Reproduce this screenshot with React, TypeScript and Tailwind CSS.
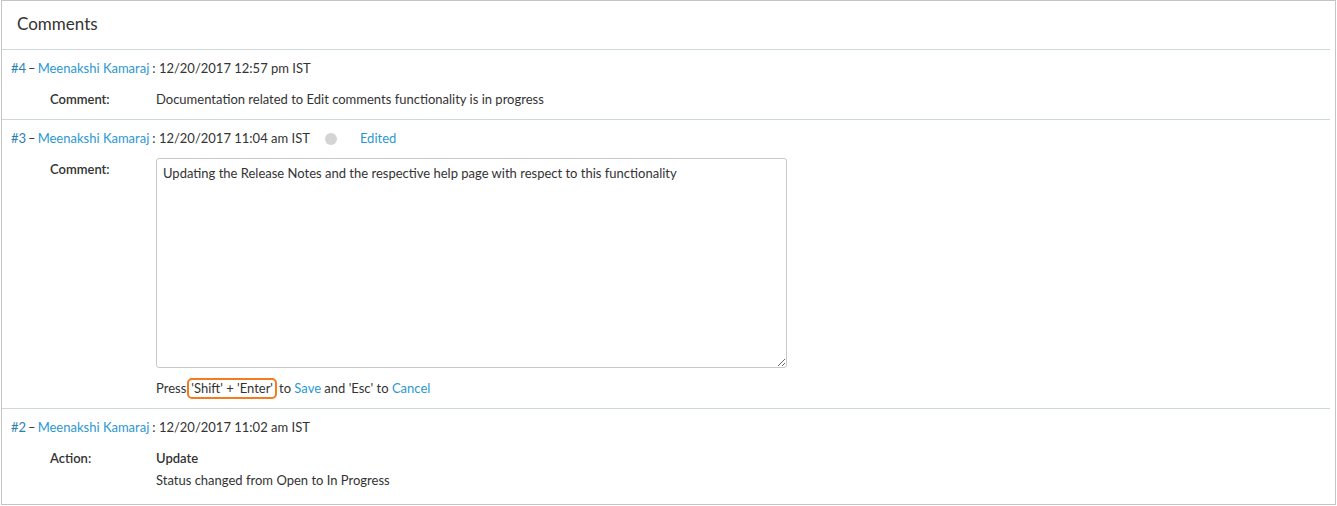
const font = { fontFamily: '"Source Sans Pro", Lato, "Open Sans", sans-serif' }

const Header = ({ num, time, edited }: { num: string; time: string; edited?: boolean }) => (
    <div className="flex items-center h-[38px] pl-[9px] text-[13px] text-[#333]">
        <span className="text-[#2e7fae]">#{num}</span>
        <span className="mx-[2px]">–</span>
        <span className="text-[#2b98d2]">Meenakshi Kamaraj</span>
        <span className="ml-[3px]">: {time}</span>
        {edited && (
            <>
                <span className="ml-[15px] w-[12px] h-[12px] rounded-full bg-[#d4d4d4]" />
                <span className="ml-[23px] text-[#2b98d2]">Edited</span>
            </>
        )}
    </div>
)

export default function App() {
    return (
        <div className="w-[1337px] h-[506px] bg-white" style={font}>
            <div className="ml-[1px] w-[1335px] h-[505px] border border-[#c4c4c4]">
                <div className="h-[49px] flex items-center pl-[15px] pb-[2px] text-[17px] text-[#333] border-b border-[#cfd8d8] mr-[5px]">
                    Comments
                </div>
                {/* #4 */}
                <div className="h-[70px] border-b border-[#cfd8d8] mr-[5px]">
                    <Header num="4" time="12/20/2017 12:57 pm IST" />
                    <div className="flex text-[13px] text-[#333] leading-[22px]">
                        <span className="w-[154px] pl-[48px] font-semibold">Comment:</span>
                        <span>Documentation related to Edit comments functionality is in progress</span>
                    </div>
                </div>
                {/* #3 */}
                <div className="h-[289px] border-b border-[#cfd8d8] mr-[5px]">
                    <Header num="3" time="12/20/2017 11:04 am IST" edited />
                    <div className="flex text-[13px] text-[#333]">
                        <span className="w-[154px] pl-[48px] pt-[2px] font-semibold">Comment:</span>
                        <div>
                            <textarea
                                className="block w-[631px] h-[210px] border border-[#c8c8c8] rounded-[3px] px-[6px] py-[5px] text-[13px] text-[#333] outline-none"
                                style={font}
                                defaultValue="Updating the Release Notes and the respective help page with respect to this functionality"
                            />
                            <div className="mt-[10px] flex items-center">
                                <span>Press</span>
                                <span className="border-2 border-[#f47b20] rounded-[5px] px-[2px] h-[21px] flex items-center ml-[1px]">'Shift' + 'Enter'</span>
                                <span className="ml-[2px]">to <span className="text-[#2b98d2]">Save</span> and 'Esc' to <span className="text-[#2b98d2]">Cancel</span></span>
                            </div>
                        </div>
                    </div>
                </div>
                {/* #2 */}
                <div className="mr-[5px]">
                    <Header num="2" time="12/20/2017 11:02 am IST" />
                    <div className="flex text-[13px] text-[#333] leading-[22px]">
                        <span className="w-[154px] pl-[48px] font-semibold">Action:</span>
                        <div>
                            <div className="font-semibold">Update</div>
                            <div>Status changed from Open to In Progress</div>
                        </div>
                    </div>
                </div>
            </div>
        </div>
    )
}
